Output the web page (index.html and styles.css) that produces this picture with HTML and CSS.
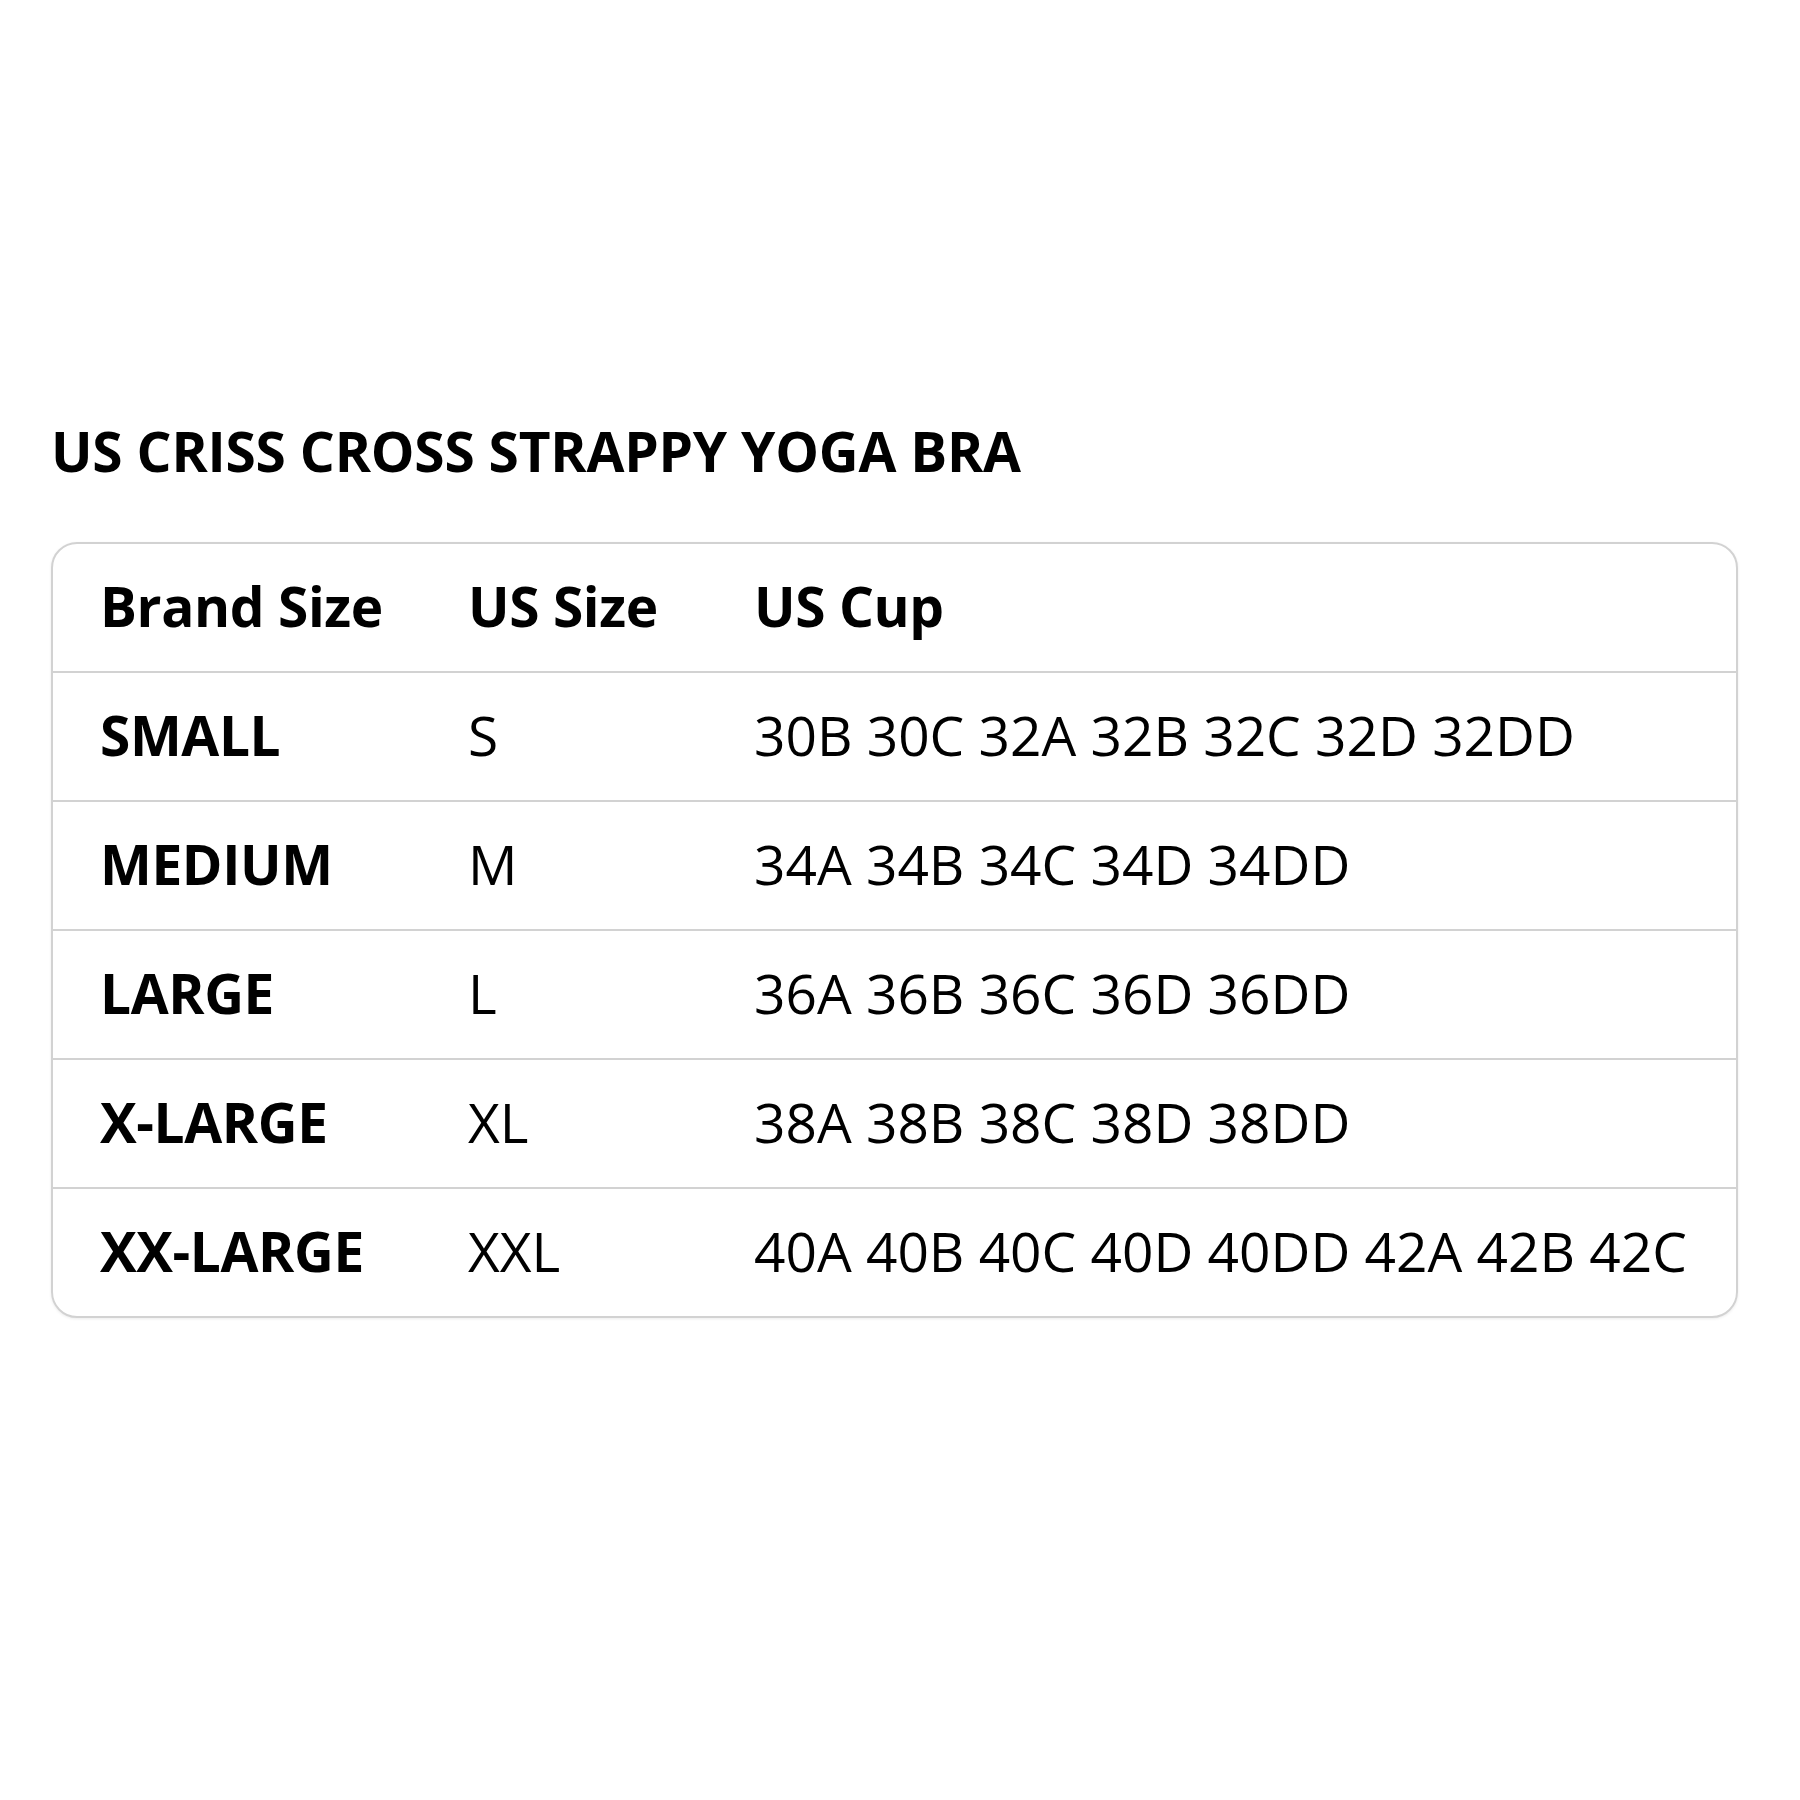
FILE: index.html
```html
<!DOCTYPE html>
<html lang="en">
<head>
<meta charset="utf-8">
<title>US Criss Cross Strappy Yoga Bra – Size Chart</title>
<link rel="stylesheet" href="styles.css">
</head>
<body>
<main class="page">
  <h1 class="title">US CRISS CROSS STRAPPY YOGA BRA</h1>
  <div class="chart">
    <div class="row head">
      <div class="cell">Brand Size</div>
      <div class="cell">US Size</div>
      <div class="cell">US Cup</div>
    </div>
    <div class="row">
      <div class="cell brand">SMALL</div>
      <div class="cell">S</div>
      <div class="cell">30B 30C 32A 32B 32C 32D 32DD</div>
    </div>
    <div class="row">
      <div class="cell brand">MEDIUM</div>
      <div class="cell">M</div>
      <div class="cell">34A 34B 34C 34D 34DD</div>
    </div>
    <div class="row">
      <div class="cell brand">LARGE</div>
      <div class="cell">L</div>
      <div class="cell">36A 36B 36C 36D 36DD</div>
    </div>
    <div class="row">
      <div class="cell brand">X-LARGE</div>
      <div class="cell">XL</div>
      <div class="cell">38A 38B 38C 38D 38DD</div>
    </div>
    <div class="row">
      <div class="cell brand">XX-LARGE</div>
      <div class="cell">XXL</div>
      <div class="cell">40A 40B 40C 40D 40DD 42A 42B 42C</div>
    </div>
  </div>
</main>
</body>
</html>
```

FILE: styles.css
```css
html, body {
  margin: 0;
  padding: 0;
  background: #ffffff;
}

body {
  width: 1800px;
  height: 1800px;
  font-family: "Open Sans", "Noto Sans", "Liberation Sans", sans-serif;
  color: #000000;
}

.page {
  padding: 418px 62px 0 51px;
}

.title {
  margin: 0;
  font-size: 55px;
  line-height: 66px;
  font-weight: 700;
  letter-spacing: -0.2px;
}

.chart {
  margin-top: 58px;
  border: 2px solid #d2d2d2;
  border-radius: 26px;
  box-shadow: 0 1px 3px rgba(0, 0, 0, 0.08);
  overflow: hidden;
}

.row {
  display: grid;
  grid-template-columns: 368px 286px 1fr;
  align-items: center;
  box-sizing: border-box;
  height: 127px;
  padding: 0 0 4px 47px;
}

.row + .row {
  height: 129px;
  border-top: 2px solid #d2d2d2;
}

.cell {
  font-size: 55px;
  line-height: 1.2;
  white-space: nowrap;
}

.head .cell,
.cell.brand {
  font-weight: 700;
  letter-spacing: -0.4px;
}
```
